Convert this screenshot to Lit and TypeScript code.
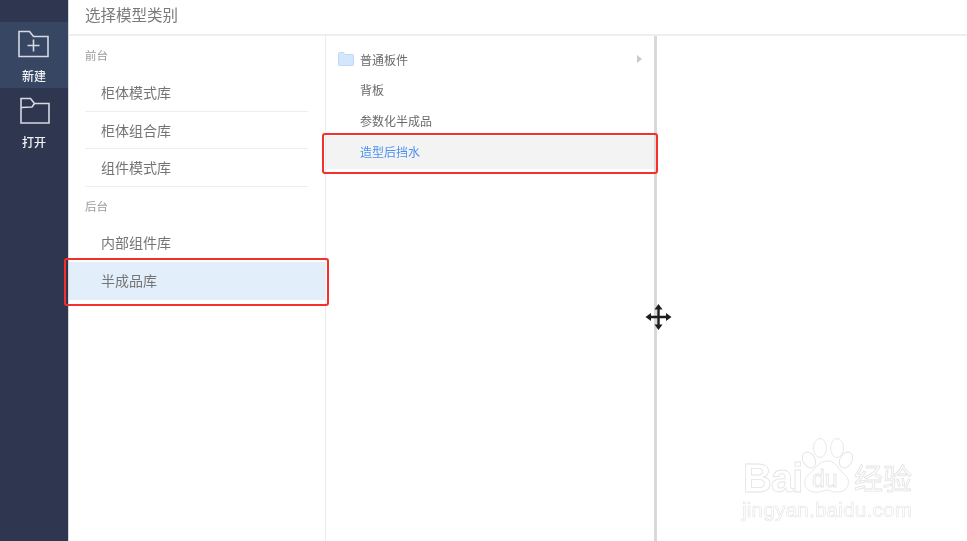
import { LitElement, html, css } from "lit";
import { customElement } from "lit/decorators.js";

@customElement("app-root")
export class AppRoot extends LitElement {
  static styles = css`
    :host { display: block; width: 967px; height: 541px; position: relative; overflow: hidden; background: #fff;
      font-family: "Noto Sans CJK SC", "Liberation Sans", sans-serif; }
    .app { display: flex; height: 541px; }
    .side { width: 69px; flex: none; background: #2f3750; display: flex; flex-direction: column; padding-top: 22px; box-sizing: border-box; border-right: 1px solid #d4d6dc; }
    .tool { height: 66px; display: flex; flex-direction: column; align-items: center; color: #f2f3f6; font-size: 12px; line-height: 14px; font-weight: 500; filter: blur(.5px); }
    .tool svg { display: block; margin-top: 8px; margin-bottom: 9px; }
    .tool.on { background: #364663; }
    .tool.on svg { margin-right: 2px; }
    .tool.open svg { margin-top: 9px; margin-bottom: 10px; }
    .main { flex: 1; display: flex; flex-direction: column; min-width: 0; }
    .head { height: 36px; flex: none; box-sizing: border-box; border-bottom: 2px solid #eeeeee; padding: 4px 0 0 16px; font-size: 15.500px; line-height: 21px; color: #7a7a7a; }
    .head span, .group span, .lib span, .row span { filter: blur(.5px); display: inline-block; }
    .cols { flex: 1; display: flex; min-height: 0; }
    .c1 { width: 257px; flex: none; box-sizing: border-box; border-right: 1px solid #ececec; padding-top: 11px; }
    .group { font-size: 11.500px; line-height: 16px; color: #9a9a9a; padding-left: 16px; }
    .group.g1 { margin-bottom: 11px; }
    .group.g2 { margin-top: 11px; margin-bottom: 10px; }
    .lib { height: 37.600px; margin-left: 16px; margin-right: 17px; padding-left: 16px; box-sizing: border-box; border-bottom: 1px solid #eeeeee; font-size: 14px; line-height: 36px; color: #747474; }
    .lib.plain { border-bottom: none; height: 38px; line-height: 37px; }
    .lib.sel { margin: 0; padding-left: 32px; height: 38px; line-height: 37px; background: #e3eefb; border: none; }
    .c2 { width: 328px; flex: none; box-sizing: border-box; padding-top: 8px; }
    .row { height: 30.500px; display: flex; align-items: center; padding-left: 34px; font-size: 12px; color: #6a6a6a; }
    .row.f { padding-left: 12px; gap: 6px; padding-right: 12px; }
    .row.f span { flex: 1; }
    .row.sel { background: #f3f3f3; color: #4a90f0; height: 33px; line-height: 31px; align-items: flex-start; }
    .arrow { width: 0; height: 0; border-left: 5px solid #c9c9c9; border-top: 4px solid transparent; border-bottom: 4px solid transparent; }
    .split { width: 3px; flex: none; background: #d9d9d9; }
    .c3 { flex: 1; }
    .mark { position: absolute; box-sizing: border-box; border: 2px solid #f5302a; border-radius: 3px; pointer-events: none; filter: blur(.3px); }
    .m1 { left: 64px; top: 258px; width: 265px; height: 48px; }
    .m2 { left: 322px; top: 133px; width: 336px; height: 41px; }
    .move { position: absolute; left: 645px; top: 303px; filter: blur(.3px); }
    .wm { position: absolute; left: 742px; top: 436px; width: 180px; height: 85px; color: #fff; -webkit-text-stroke: .8px #e4e4e4; font-family: "Liberation Sans", "Noto Sans CJK SC", sans-serif; filter: blur(.3px); }
    .wm svg { position: absolute; left: 0; top: 0; }
    .bai { position: absolute; left: 1px; top: 24px; font-size: 40px; line-height: 36px; letter-spacing: -1px; font-weight: 700; }
    .du { position: absolute; left: 70px; top: 31px; font-size: 23px; line-height: 24px; }
    .cn { position: absolute; left: 112px; top: 26px; font-size: 29px; line-height: 30px; font-family: "Noto Sans CJK SC", sans-serif; }
    .jing { position: absolute; left: 0; top: 64px; font-size: 20.800px; line-height: 20px; letter-spacing: .15px; -webkit-text-stroke-width: .6px; }
  `;

  render() {
    return html`
      <div class="app">
        <nav class="side">
          <div class="tool on">
            <svg width="32" height="30" viewBox="0 0 32 30" fill="none" stroke="#d5d9e2" stroke-width="1.600">
              <path d="M2 1.500h10.500l4 5H31v20H2z"/><path d="M16.500 9.500v12M10.500 15.500h12"/>
            </svg>新建
          </div>
          <div class="tool open">
            <svg width="32" height="28" viewBox="0 0 32 28" fill="none" stroke="#d5d9e2" stroke-width="1.600">
              <path d="M3 26V1.500h9.500l4 5H31v19.500z"/><path d="M3 10.500l11-.5 2.500-3.500"/>
            </svg>打开
          </div>
        </nav>
        <div class="main">
          <header class="head"><span>选择模型类别</span></header>
          <div class="cols">
            <section class="c1">
              <div class="group g1"><span>前台</span></div>
              <div class="lib"><span>柜体模式库</span></div>
              <div class="lib"><span>柜体组合库</span></div>
              <div class="lib"><span>组件模式库</span></div>
              <div class="group g2"><span>后台</span></div>
              <div class="lib plain"><span>内部组件库</span></div>
              <div class="lib sel"><span>半成品库</span></div>
            </section>
            <section class="c2">
              <div class="row f">
                <svg width="16" height="14" viewBox="0 0 16 14"><path d="M.5 1.500a1 1 0 0 1 1-1h4l1.500 2h7.500a1 1 0 0 1 1 1v9a1 1 0 0 1-1 1h-13a1 1 0 0 1-1-1z" fill="#d3e6fc" stroke="#bcd8fa"/></svg>
                <span>普通板件</span><i class="arrow"></i>
              </div>
              <div class="row"><span>背板</span></div>
              <div class="row"><span>参数化半成品</span></div>
              <div class="row sel"><span>造型后挡水</span></div>
            </section>
            <div class="split"></div>
            <div class="c3"></div>
          </div>
        </div>
      </div>
      <div class="mark m1"></div>
      <div class="mark m2"></div>
      <svg class="move" width="27" height="28" viewBox="0 0 27 28" fill="#1d1d1d">
        <path d="M12.300 6h2.400v6.800H21v2.400h-6.300V22h-2.400v-6.800H6v-2.400h6.300z"/>
        <path d="M13.500 1l4 5.500h-8zM13.500 27l4-5.500h-8zM.5 14L6 10v8zM26.500 14L21 10v8z"/>
      </svg>
      <div class="wm">
        <div class="bai">Bai</div>
        <svg width="180" height="85" viewBox="0 0 180 85" fill="#fff" stroke="#e4e4e4" stroke-width=".9">
          <ellipse cx="78" cy="12" rx="6.500" ry="9.500"/>
          <ellipse cx="95" cy="12" rx="6.500" ry="9.500"/>
          <ellipse cx="67" cy="24" rx="6" ry="8.500" transform="rotate(-30 67 24)"/>
          <ellipse cx="104" cy="24" rx="6" ry="8.500" transform="rotate(30 104 24)"/>
          <path d="M86 25c8 0 10 8 17 14 7 6 3 18-9 17-5 0-6-2-9-2s-6 3-13 2c-10-1-12-12-6-17 7-5 10-14 20-14z"/>
        </svg>
        <div class="du">du</div>
        <div class="cn">经验</div>
        <div class="jing">jingyan.baidu.com</div>
      </div>
    `;
  }
}
